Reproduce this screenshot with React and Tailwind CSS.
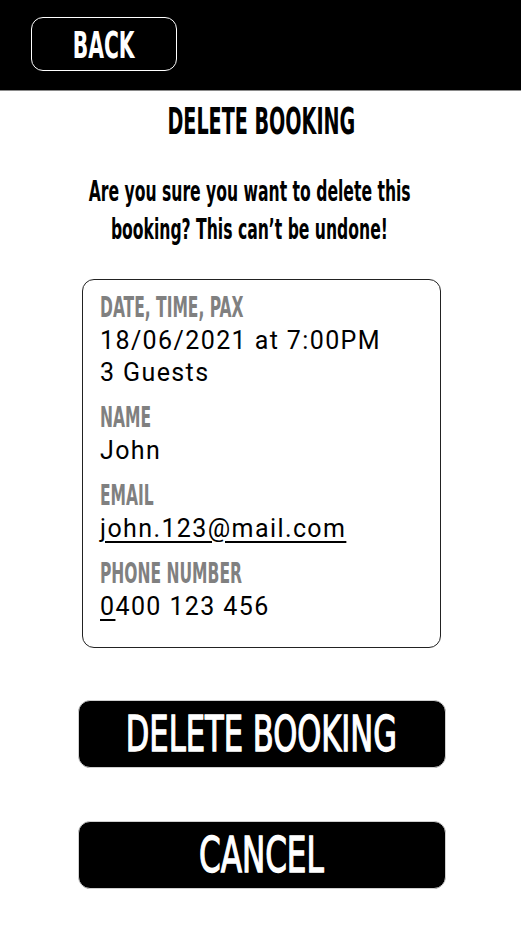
import React from "react";

const cond = { fontFamily: '"DejaVu Sans Condensed", "Liberation Sans", sans-serif' };

// squeezed text, stands in for the tall condensed face in the mockup
const Squeeze = ({ className, children }) => (
  <span className={"inline-block whitespace-nowrap " + className}>{children}</span>
);

const Field = ({ label, children }) => (
  <div className="flex flex-col">
    <div className="text-[28px] leading-[34px] font-bold text-[#808080]" style={cond}>
      <Squeeze className="origin-left scale-x-[0.616]">{label}</Squeeze>
    </div>
    <div className="font-['Roboto',sans-serif] text-[25px] leading-[32px] tracking-[1.4px] text-black">
      {children}
    </div>
  </div>
);

export default function App() {
  return (
    <div className="w-[521px] min-h-[927px] bg-white">
      {/* Top bar */}
      <header className="h-[91px] bg-black border-b border-[#8a8a8a] pt-[17px] pl-[31px]">
        <button className="w-[146px] h-[54px] rounded-[12px] border-[1.5px] border-white flex items-center justify-center text-white text-[37px] font-bold leading-none" style={cond}>
          <Squeeze className="scale-x-[0.61] translate-y-[1px]">BACK</Squeeze>
        </button>
      </header>

      <main className="flex flex-col items-center pt-[11px] pl-[2px]">
        <h1 className="text-[37px] leading-[40px] font-bold text-black" style={cond}>
          <Squeeze className="scale-x-[0.575]">DELETE BOOKING</Squeeze>
        </h1>

        <p className="mt-[31px] pr-[24px] text-center text-[28px] leading-[38px] font-bold text-black" style={cond}>
          <Squeeze className="scale-x-[0.62]">Are you sure you want to delete this</Squeeze>
          <br />
          <Squeeze className="scale-x-[0.62]">booking? This can’t be undone!</Squeeze>
        </p>

        {/* Booking details */}
        <div className="mt-[30px] w-[359px] rounded-[12px] border-[1.5px] border-[#222] pt-[11px] pb-[24px] pl-[17px] flex flex-col gap-[12px]">
          <Field label="DATE, TIME, PAX">
            <div>18/06/2021 at 7:00PM</div>
            <div>3 Guests</div>
          </Field>
          <Field label="NAME">John</Field>
          <Field label="EMAIL">
            <span className="underline underline-offset-[4px] decoration-[1.5px]">john.123@mail.com</span>
          </Field>
          <Field label="PHONE NUMBER">
            <span className="underline underline-offset-[4px] decoration-[1.5px]">0</span>400 123 456
          </Field>
        </div>

        <button className="mt-[52px] w-[368px] h-[68px] rounded-[12px] bg-black border border-[#cfcfcf] flex items-center justify-center text-white text-[50px] font-normal leading-none [-webkit-text-stroke:1.3px_white]" style={cond}>
          <Squeeze className="scale-x-[0.68]">DELETE BOOKING</Squeeze>
        </button>
        <button className="mt-[53px] w-[368px] h-[68px] rounded-[12px] bg-black border border-[#cfcfcf] flex items-center justify-center text-white text-[50px] font-normal leading-none [-webkit-text-stroke:1.3px_white]" style={cond}>
          <Squeeze className="scale-x-[0.69]">CANCEL</Squeeze>
        </button>
      </main>
    </div>
  );
}
